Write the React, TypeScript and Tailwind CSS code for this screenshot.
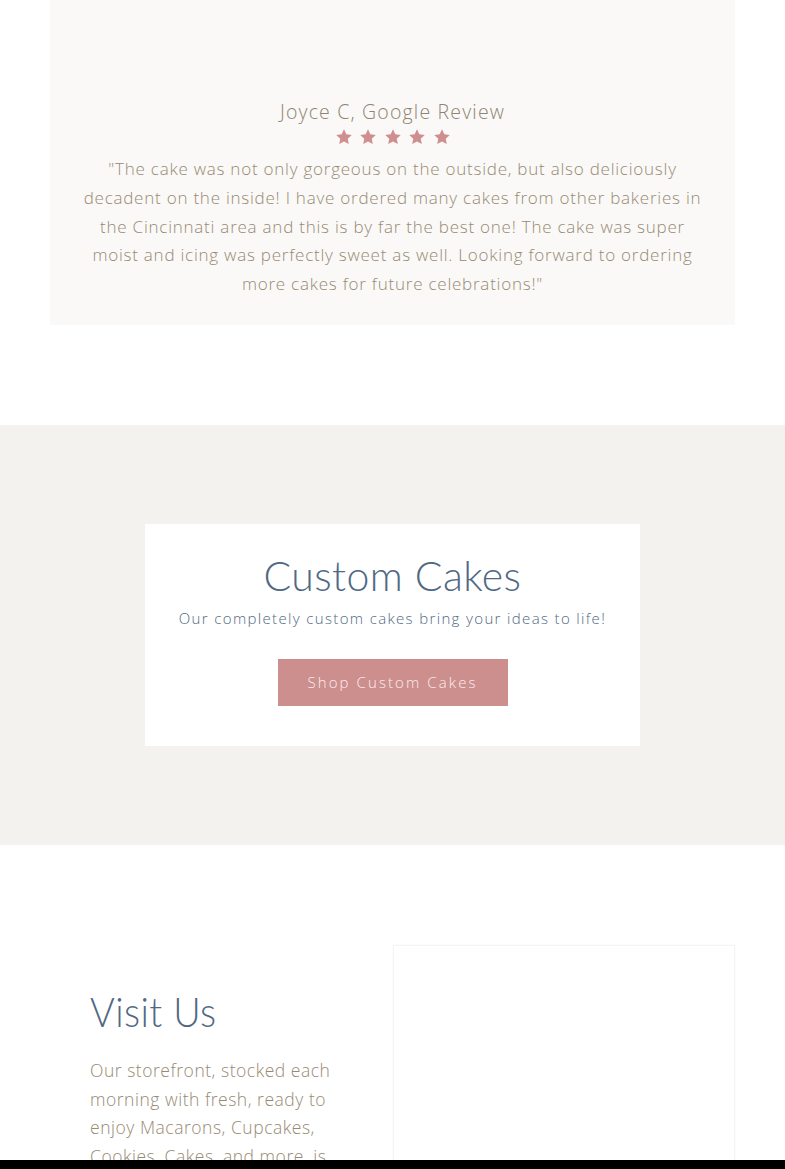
import React from "react";

const body = { fontFamily: '"Open Sans", "Noto Sans", sans-serif' };
const display = { fontFamily: 'Lato, "Open Sans", sans-serif' };

function Star() {
  return (
    <svg width="18" height="18" viewBox="0 0 24 24" className="fill-[#cf8f8f]">
      <path d="M12 1.8l3.1 6.6 7.2.9-5.3 5 1.4 7.1L12 17.9l-6.4 3.5L7 14.3l-5.3-5 7.2-.9z" strokeLinejoin="round" />
    </svg>
  );
}

export default function App() {
  return (
    <div className="w-[785px] h-[1169px] overflow-hidden bg-white flex flex-col" style={body}>
      {/* Review card */}
      <div className="px-[50px]">
        <div className="bg-[#faf9f7] h-[325px] flex flex-col items-center pt-[97px] px-4">
          <div className="text-[19.5px] leading-[30px] tracking-[0.06em] text-[#8e8472] font-light">
            Joyce C, Google Review
          </div>
          <div className="flex gap-[6.5px] mt-[1px]">
            <Star />
            <Star />
            <Star />
            <Star />
            <Star />
          </div>
          <p className="mt-[9px] text-center text-[17px] leading-[28.8px] text-[#978a74] font-light tracking-[0.045em] whitespace-nowrap">
            "The cake was not only gorgeous on the outside, but also deliciously
            <br />
            decadent on the inside! I have ordered many cakes from other bakeries in
            <br />
            the Cincinnati area and this is by far the best one! The cake was super
            <br />
            moist and icing was perfectly sweet as well. Looking forward to ordering
            <br />
            more cakes for future celebrations!"
          </p>
        </div>
      </div>

      <div className="h-[100px]" />

      {/* Custom cakes section */}
      <div className="bg-[#f3f2ee] h-[420px] flex items-center justify-center">
        <div className="bg-white w-[495px] h-[222px] flex flex-col items-center pt-[26px]">
          <h2 className="text-[41px] leading-[52px] text-[#4f6984] font-light tracking-[0.01em]" style={display}>
            Custom Cakes
          </h2>
          <p className="mt-[4px] text-[15px] leading-[24px] tracking-[0.09em] text-[#4f6984] font-light">
            Our completely custom cakes bring your ideas to life!
          </p>
          <button className="mt-[29px] w-[230px] h-[47px] bg-[#cd8e8e] text-[#fbefef] text-[15px] tracking-[0.14em] font-light">
            Shop Custom Cakes
          </button>
        </div>
      </div>

      {/* Visit us */}
      <div className="h-[315px] overflow-hidden flex px-[90px] pt-[100px] pr-[50px]">
        <div className="w-[270px] pt-[42px]">
          <h2 className="text-[42px] leading-[48px] text-[#4f6984] font-light tracking-[0.01em] scale-x-[0.9] origin-left" style={display}>
            Visit Us
          </h2>
          <p className="mt-[21px] text-[17.5px] leading-[28.7px] text-[#978a74] font-light tracking-[0.03em] whitespace-nowrap">
            Our storefront, stocked each
            <br />
            morning with fresh, ready to
            <br />
            enjoy Macarons, Cupcakes,
            <br />
            Cookies, Cakes, and more, is
          </p>
        </div>
        <div className="ml-auto w-[342px] h-[300px] border border-[#f4f4f4] shadow-[0_0_3px_rgba(0,0,0,0.03)]" />
      </div>
      <div className="h-[9px] bg-black" />
    </div>
  );
}
